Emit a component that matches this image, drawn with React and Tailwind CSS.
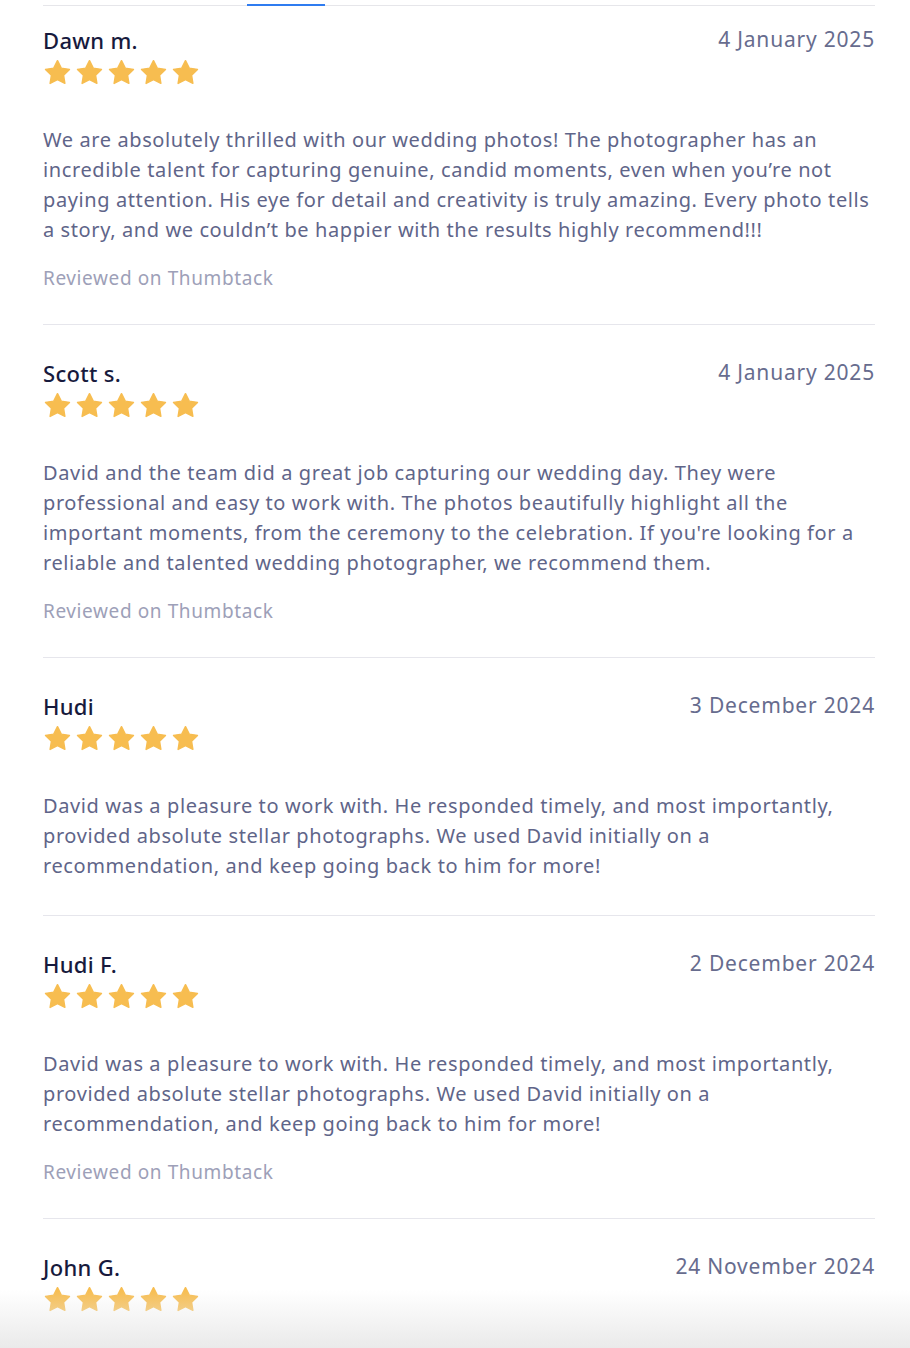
import React from 'react';

const reviews = [
  {
    name: 'Dawn m.',
    date: '4 January 2025',
    lines: [
      'We are absolutely thrilled with our wedding photos! The photographer has an',
      'incredible talent for capturing genuine, candid moments, even when you’re not',
      'paying attention. His eye for detail and creativity is truly amazing. Every photo tells',
      'a story, and we couldn’t be happier with the results highly recommend!!!',
    ],
    thumbtack: true,
  },
  {
    name: 'Scott s.',
    date: '4 January 2025',
    lines: [
      'David and the team did a great job capturing our wedding day. They were',
      'professional and easy to work with. The photos beautifully highlight all the',
      "important moments, from the ceremony to the celebration. If you're looking for a",
      'reliable and talented wedding photographer, we recommend them.',
    ],
    thumbtack: true,
  },
  {
    name: 'Hudi',
    date: '3 December 2024',
    lines: [
      'David was a pleasure to work with. He responded timely, and most importantly,',
      'provided absolute stellar photographs. We used David initially on a',
      'recommendation, and keep going back to him for more!',
    ],
    thumbtack: false,
  },
  {
    name: 'Hudi F.',
    date: '2 December 2024',
    lines: [
      'David was a pleasure to work with. He responded timely, and most importantly,',
      'provided absolute stellar photographs. We used David initially on a',
      'recommendation, and keep going back to him for more!',
    ],
    thumbtack: true,
  },
  {
    name: 'John G.',
    date: '24 November 2024',
    lines: [],
    thumbtack: false,
  },
];

function Star() {
  return (
    <svg viewBox="0 0 24 24" className="w-[29px] h-[29px]">
      <polygon
        points="12,2.2 15.1,8.4 21.9,9.4 17,14.2 18.1,21 12,17.8 5.9,21 7,14.2 2.1,9.4 8.9,8.4"
        fill="#f7bd50"
        stroke="#f7bd50"
        strokeWidth="1.2"
        strokeLinejoin="round"
      />
    </svg>
  );
}

function Review({ r, first }) {
  return (
    <div className={`${first ? 'pt-[20px]' : 'pt-[34px] border-t border-[#e6e6ec]'} pb-[34px]`}>
      <div className="flex items-center justify-between h-[28px]">
        <p className="text-[22px] tracking-[0.3px] text-[#171a3d] font-medium">{r.name}</p>
        <p className="text-[21px] tracking-[0.8px] text-[#676c8e]">{r.date}</p>
      </div>
      <div className="flex gap-[3px] mt-[4px]">
        {[0, 1, 2, 3, 4].map(i => <Star key={i} />)}
      </div>
      {r.lines.length > 0 && (
        <div className="mt-[38px] text-[20px] leading-[30px] tracking-[0.6px] text-[#5f6589]">
          {r.lines.map((l, i) => (
            <p key={i} className="whitespace-nowrap">{l}</p>
          ))}
        </div>
      )}
      {r.thumbtack && (
        <p className="mt-[21px] text-[19px] leading-[24px] tracking-[0.6px] text-[#9da0b8]">Reviewed on Thumbtack</p>
      )}
    </div>
  );
}

export default function App() {
  return (
    <div className="relative w-[910px] h-[1348px] overflow-hidden bg-white" style={{ fontFamily: '"Noto Sans", "Open Sans", sans-serif' }}>
      <div className="pl-[43px] pr-[35px]">
        {/* tab bar bottom border */}
        <div className="relative h-[6px] border-b border-[#e6e6ea]">
          <div className="absolute left-[204px] bottom-[-1px] w-[78px] h-[2px] bg-[#2f7cf0]"></div>
        </div>
        {reviews.map((r, i) => (
          <Review key={i} r={r} first={i === 0} />
        ))}
      </div>
      {/* bottom fade */}
      <div className="absolute left-0 right-0 bottom-0 h-[58px] bg-gradient-to-b from-white/0 to-[#eaeaea] pointer-events-none"></div>
    </div>
  );
}
